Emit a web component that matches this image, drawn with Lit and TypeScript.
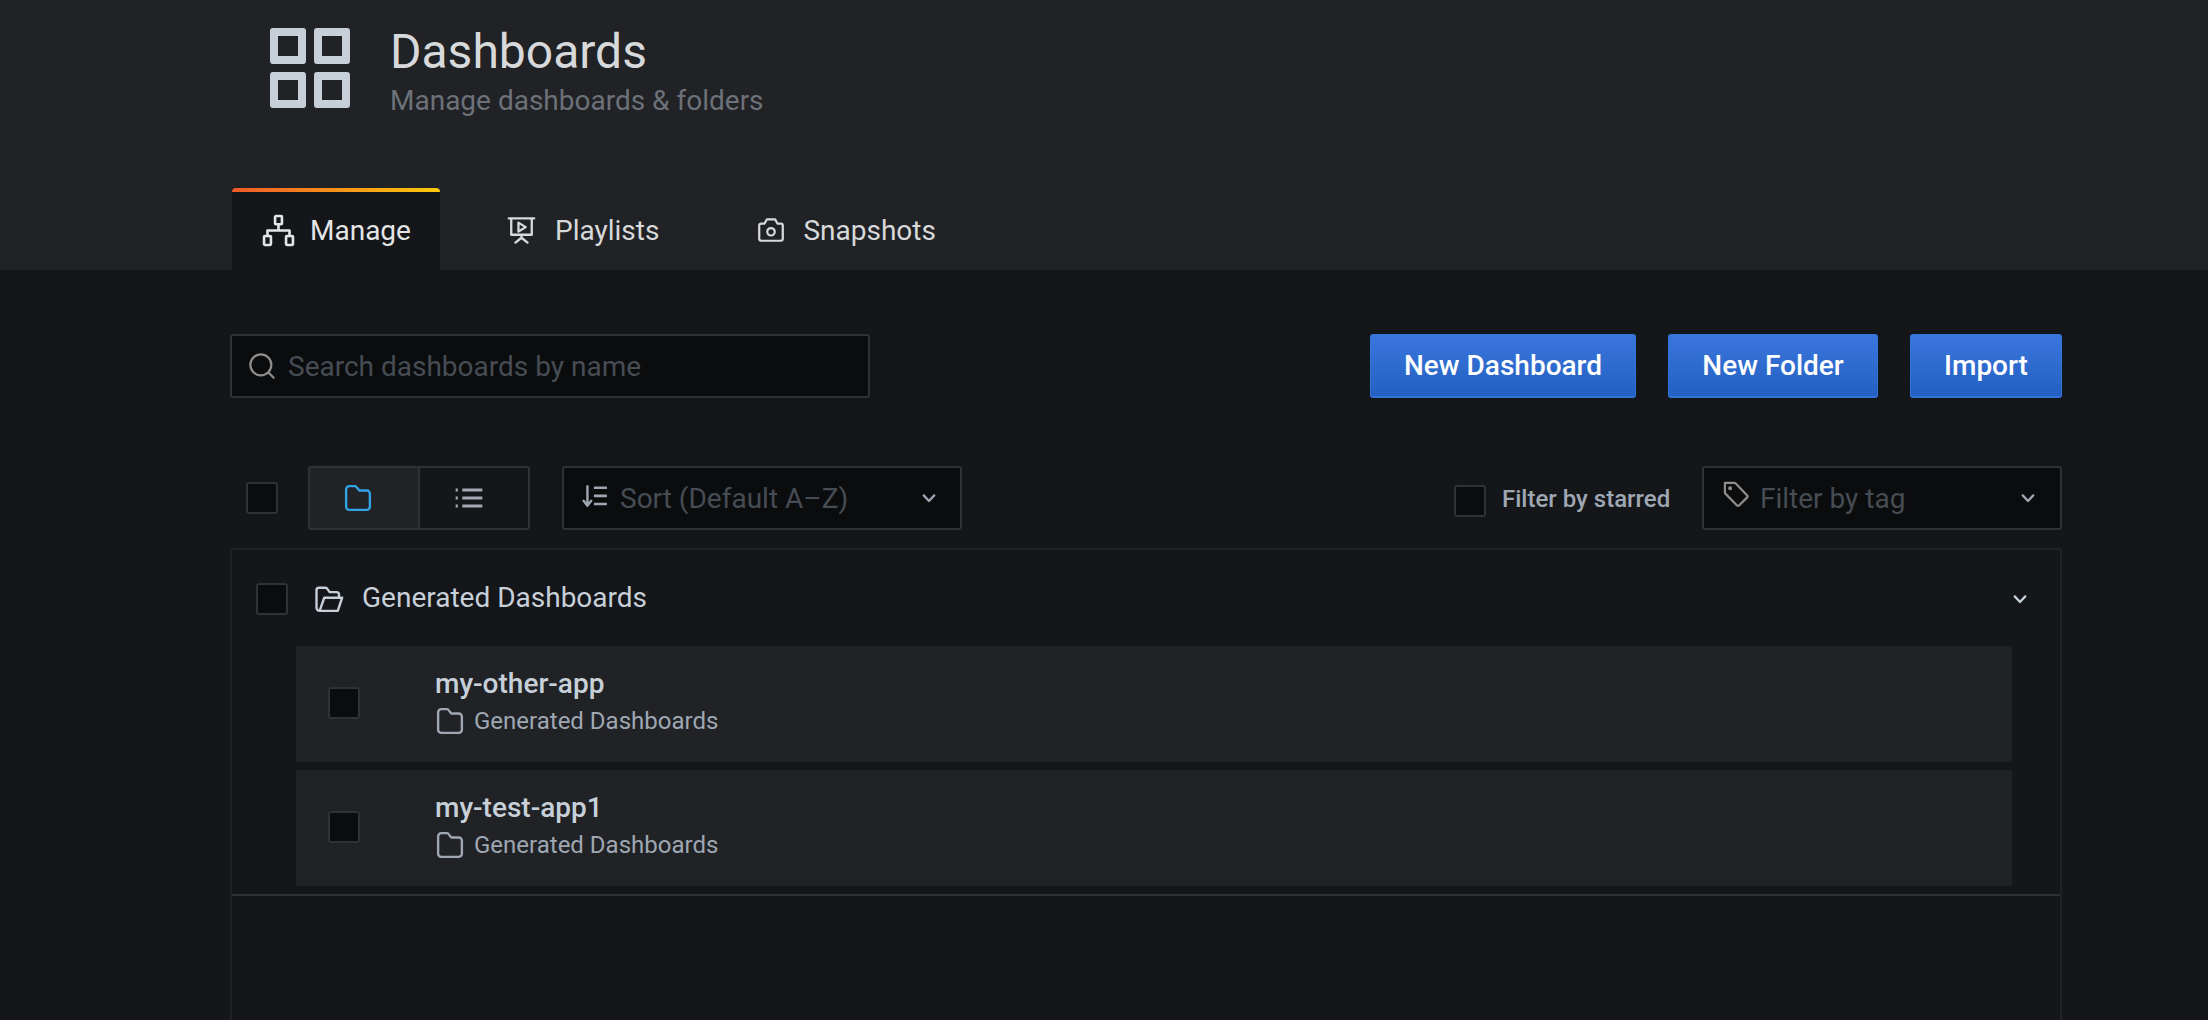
import { LitElement, html, css, svg } from "lit";
import { customElement } from "lit/decorators.js";

const ic = (w: number, cls: string, body: unknown) => html`<svg class=${cls} width=${w} height=${w} viewBox="0 0 24 24" fill="none" stroke="currentColor" stroke-width="1.9" stroke-linecap="round" stroke-linejoin="round">${body}</svg>`;

const sitemap = svg`<rect x="9.5" y="1.5" width="5" height="6" rx=".6"/><rect x="1.5" y="16" width="5" height="6.5" rx=".6"/><rect x="17.5" y="16" width="5" height="6.5" rx=".6"/><path d="M12 7.5V12M4 16v-4h16v4"/>`;
const present = svg`<path d="M1.5 2h21M3.5 2v13.5h17V2M12 15.5v3M7 22l5-4 5 4"/><path d="M9.5 5.5l6 3.7-6 3.7z"/>`;
const camera = svg`<path d="M3.5 6.5H6.5L8.5 2.8h7L17.5 6.5h3a1.6 1.6 0 0 1 1.6 1.6v11.5a1.6 1.6 0 0 1-1.6 1.6h-17a1.6 1.6 0 0 1-1.6-1.6V8.100a1.6 1.6 0 0 1 1.6-1.6z"/><circle cx="12" cy="13.500" r="3.200"/>`;
const search = svg`<circle cx="11" cy="11" r="9"/><path d="M18 18l4 4"/>`;
const folder = svg`<path d="M5 2.5h4.5a1.500 1.500 0 0 1 1.200.6L13 6h6a2.500 2.500 0 0 1 2.500 2.500V19a2.500 2.500 0 0 1-2.500 2.500H5A2.500 2.500 0 0 1 2.500 19V5A2.500 2.500 0 0 1 5 2.500z"/>`;
const folderOpen = svg`<path d="M4.500 21.500A2.500 2.500 0 0 1 2 19V5a2 2 0 0 1 2-2h5a2 2 0 0 1 1.500.7L12.500 6.500H18a2 2 0 0 1 2 2V11M4.500 21.500h14.500l3.500-10.500H8.200z"/>`;
const list = svg`<path d="M7 6h15M7 12h15M7 18h15" stroke-width="2.200" stroke-linecap="butt"/><path d="M2 6h1.600M2 12h1.600M2 18h1.600" stroke-width="2.200" stroke-linecap="butt"/>`;
const chevron = svg`<path d="M5 8.500l7 7.500 7-7.500" stroke-width="3"/>`;
const sort = svg`<path d="M5 2v17M1.500 15.500L5 20l3.500-4.500" stroke-width="2.200"/><path d="M11 3.500h12M11 11h12M11 18.500h12" stroke-width="2.400" stroke-linecap="butt"/>`;
const tag = svg`<path d="M2.500 2.500h8.200a1.500 1.500 0 0 1 1.100.5l9.600 10a1.500 1.500 0 0 1 0 2.100l-6.600 6.600a1.500 1.500 0 0 1-2.100 0L2.900 11.700a1.500 1.500 0 0 1-.4-1z"/><circle cx="7" cy="7" r=".8"/>`;

@customElement("app-root")
export class AppRoot extends LitElement {
  static styles = css`
    :host { display: block; height: 1020px; overflow: hidden; background: #141619; font-family: Roboto, "Liberation Sans", sans-serif; }
    * { box-sizing: border-box; }
    svg { display: block; flex: none; }
    header { height: 270px; background: #202226; display: flex; flex-direction: column; justify-content: space-between; }
    .title-row { display: flex; padding: 28px 0 0 270px; gap: 40px; }
    .logo { display: grid; grid-template-columns: 36px 36px; grid-auto-rows: 36px; gap: 8px; }
    .logo i { display: block; border: 8px solid #c7d0d9; border-radius: 3px; }
    h1 { margin: -4px 0 0; font-size: 48px; line-height: 56px; font-weight: 400; color: #d8d9da; }
    .sub { font-size: 28px; line-height: 34px; color: #6d7178; margin-top: 4px; }
    .tabs { display: flex; margin-left: 232px; height: 82px; }
    .tab { display: flex; align-items: center; font-size: 28px; color: #d8d9da; height: 82px; padding-bottom: 2px; }
    .tab.active { width: 208px; padding: 4px 0 2px 30px; gap: 15px; border-radius: 4px 4px 0 0; background: linear-gradient(90deg, #f05a28, #fbca0a) top / 100% 4px no-repeat, #141619; color: #e4e5e6; }
    .tab.pl { padding: 4px 0 2px 67px; gap: 19px; margin-right: 98px; }
    .tab.sn { padding: 4px 0 2px 0; gap: 18px; }
    main { padding: 64px 146px 0 230px; }
    .top { display: flex; justify-content: space-between; }
    .input { height: 64px; background: #0b0c0e; border: 2px solid #2c3235; border-radius: 3px; display: flex; align-items: center; color: #464c54; font-size: 28px; }
    .search { width: 640px; padding-left: 16px; gap: 12px; color: #464c54; }
    .search svg { color: #8e8e8e; }
    .btns { display: flex; gap: 32px; }
    .btn { height: 64px; border-radius: 3px; border: 1px solid #3274d9; border-bottom-width: 2px; background: linear-gradient(#3a76dc, #2360c2); color: #fff; font-size: 28px; font-weight: 500; display: flex; align-items: center; justify-content: center; }
    .toolbar { display: flex; align-items: center; height: 64px; margin-top: 68px; }
    .cb { display: block; flex: none; width: 32px; height: 32px; background: #0b0c0e; border: 2px solid #2c3235; border-radius: 3px; }
    .toolbar > .cb { margin-left: 16px; }
    .toggle { margin-left: 30px; display: flex; width: 222px; height: 64px; border: 2px solid #2c3235; border-radius: 3px; }
    .toggle div { flex: 1; display: flex; align-items: center; justify-content: center; }
    .toggle .on { flex: none; width: 110px; padding-right: 12px; background: #202226; color: #33a2e5; border-right: 2px solid #2c3235; }
    .toggle .off { color: #a4a9b2; padding-right: 10px; }
    .sort { margin-left: 32px; width: 400px; padding: 0 22px 0 18px; }
    .sort .lbl, .tagsel .lbl { flex: 1; }
    .sort .ico { color: #9fa7b3; margin: -2px 12px 0 0; }
    .sort .chev, .tagsel .chev { color: #9fa7b3; }
    .star { margin-left: auto; display: flex; align-items: center; gap: 16px; padding-top: 1px; }
    .star .cb { margin-top: 5px; }
    .star .lb { font-size: 24px; font-weight: 500; color: #9fa7b3; width: 200px; }
    .tagsel { width: 360px; padding: 0 23px 0 18px; }
    .tagsel .ico { color: #8e8e8e; margin: -8px 10px 0 0; }
    .panel { margin-top: 18px; height: 480px; border: 2px solid #202226; border-bottom: none; border-radius: 3px 3px 0 0; }
    .section { display: flex; align-items: center; height: 66px; margin-top: 16px; padding: 0 31px 0 24px; color: #d8d9da; }
    .section .name { flex: 1; margin-left: 18px; color: #c7d0d9; font-size: 28px; margin-top: -3px; }
    .section .fo { margin-left: 26px; color: #c7d0d9; }
    .section .ch { color: #c7d0d9; }
    .rows { display: flex; flex-direction: column; gap: 8px; padding: 14px 48px 8px 64px; border-bottom: 2px solid #2c3235; }
    .row { display: flex; align-items: center; height: 116px; background: #202226; border-radius: 3px; padding-left: 32px; }
    .row .cb { margin-top: -2px; }
    .row .t { margin: -5px 0 0 75px; }
    .row .n { font-size: 28px; line-height: 34px; font-weight: 500; color: #c7d0d9; }
    .row .f { display: flex; align-items: center; gap: 9px; font-size: 24px; line-height: 30px; color: #9fa7b3; margin-top: 5px; }
  `;

  row(name: string) {
    return html`<div class="row"><span class="cb"></span><div class="t"><div class="n">${name}</div><div class="f">${ic(30, "", folder)}<span>Generated Dashboards</span></div></div></div>`;
  }

  render() {
    return html`
      <header>
        <div class="title-row">
          <div class="logo"><i></i><i></i><i></i><i></i></div>
          <div><h1>Dashboards</h1><div class="sub">Manage dashboards &amp; folders</div></div>
        </div>
        <nav class="tabs">
          <div class="tab active">${ic(33, "", sitemap)}<span>Manage</span></div>
          <div class="tab pl">${ic(29, "", present)}<span>Playlists</span></div>
          <div class="tab sn">${ic(28, "", camera)}<span>Snapshots</span></div>
        </nav>
      </header>
      <main>
        <div class="top">
          <div class="input search">${ic(28, "", search)}<span>Search dashboards by name</span></div>
          <div class="btns">
            <div class="btn" style="width:266px">New Dashboard</div>
            <div class="btn" style="width:210px">New Folder</div>
            <div class="btn" style="width:152px">Import</div>
          </div>
        </div>
        <div class="toolbar">
          <span class="cb"></span>
          <div class="toggle"><div class="on">${ic(30, "", folder)}</div><div class="off">${ic(32, "", list)}</div></div>
          <div class="input sort">${ic(26, "ico", sort)}<span class="lbl">Sort (Default A–Z)</span>${ic(18, "chev", chevron)}</div>
          <div class="star"><span class="cb"></span><span class="lb">Filter by starred</span></div>
          <div class="input tagsel">${ic(28, "ico", tag)}<span class="lbl">Filter by tag</span>${ic(18, "chev", chevron)}</div>
        </div>
        <div class="panel">
          <div class="section"><span class="cb"></span>${ic(30, "fo", folderOpen)}<span class="name">Generated Dashboards</span>${ic(18, "ch", chevron)}</div>
          <div class="rows">${this.row("my-other-app")}${this.row("my-test-app1")}</div>
        </div>
      </main>`;
  }
}
